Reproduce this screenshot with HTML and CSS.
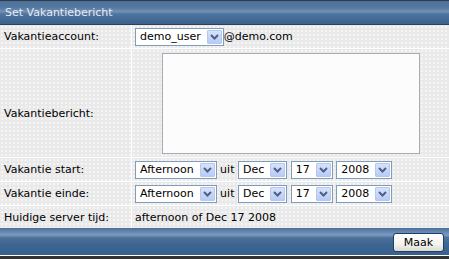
FILE: index.html
```html
<!DOCTYPE html>
<html lang="nl">

<head>
    <meta charset="UTF-8">
    <title>Set Vakantiebericht</title>
    <link rel="stylesheet" href="styles.css">
</head>

<body>
    <div class="panel">
        <div class="titlebar">Set Vakantiebericht</div>

        <div class="row">
            <div class="label">Vakantieaccount:</div>
            <div class="value">
                <span class="line"><span class="select"><span class="sel-text">demo_user</span><span class="sel-btn"><svg width="9" height="6" viewBox="0 0 9 6"><path d="M1 1 L4.5 4.5 L8 1" fill="none" stroke="#4d6185" stroke-width="2"/></svg></span></span>@demo.com</span>
            </div>
        </div>

        <div class="row row-tall">
            <div class="label label-low">Vakantiebericht:</div>
            <div class="value value-center">
                <textarea class="bericht"></textarea>
            </div>
        </div>

        <div class="row">
            <div class="label">Vakantie start:</div>
            <div class="value">
                <span class="line">
                    <span class="select"><span class="sel-text">Afternoon</span><span class="sel-btn"><svg width="9" height="6" viewBox="0 0 9 6"><path d="M1 1 L4.5 4.5 L8 1" fill="none" stroke="#4d6185" stroke-width="2"/></svg></span></span>
                    uit
                    <span class="select"><span class="sel-text">Dec</span><span class="sel-btn"><svg width="9" height="6" viewBox="0 0 9 6"><path d="M1 1 L4.5 4.5 L8 1" fill="none" stroke="#4d6185" stroke-width="2"/></svg></span></span>
                    <span class="select"><span class="sel-text">17</span><span class="sel-btn"><svg width="9" height="6" viewBox="0 0 9 6"><path d="M1 1 L4.5 4.5 L8 1" fill="none" stroke="#4d6185" stroke-width="2"/></svg></span></span>
                    <span class="select"><span class="sel-text">2008</span><span class="sel-btn"><svg width="9" height="6" viewBox="0 0 9 6"><path d="M1 1 L4.5 4.5 L8 1" fill="none" stroke="#4d6185" stroke-width="2"/></svg></span></span>
                </span>
            </div>
        </div>

        <div class="row">
            <div class="label">Vakantie einde:</div>
            <div class="value">
                <span class="line">
                    <span class="select"><span class="sel-text">Afternoon</span><span class="sel-btn"><svg width="9" height="6" viewBox="0 0 9 6"><path d="M1 1 L4.5 4.5 L8 1" fill="none" stroke="#4d6185" stroke-width="2"/></svg></span></span>
                    uit
                    <span class="select"><span class="sel-text">Dec</span><span class="sel-btn"><svg width="9" height="6" viewBox="0 0 9 6"><path d="M1 1 L4.5 4.5 L8 1" fill="none" stroke="#4d6185" stroke-width="2"/></svg></span></span>
                    <span class="select"><span class="sel-text">17</span><span class="sel-btn"><svg width="9" height="6" viewBox="0 0 9 6"><path d="M1 1 L4.5 4.5 L8 1" fill="none" stroke="#4d6185" stroke-width="2"/></svg></span></span>
                    <span class="select"><span class="sel-text">2008</span><span class="sel-btn"><svg width="9" height="6" viewBox="0 0 9 6"><path d="M1 1 L4.5 4.5 L8 1" fill="none" stroke="#4d6185" stroke-width="2"/></svg></span></span>
                </span>
            </div>
        </div>

        <div class="row row-last">
            <div class="label">Huidige server tijd:</div>
            <div class="value"><span class="line">afternoon of Dec 17 2008</span></div>
        </div>

        <div class="footer">
            <button class="maak">Maak</button>
        </div>
    </div>
</body>
</html>
```

FILE: styles.css
```css
body {
    margin: 0;
    font-family: "DejaVu Sans", Verdana, sans-serif;
    font-size: 11px;
    color: #000;
    background-color: #333;
}

.panel {
    width: 449px;
    height: 259px;
    background-color: #fff;
    border-bottom: 3px solid #333;
    box-sizing: border-box;
    overflow: hidden;
}

.titlebar {
    height: 25px;
    box-sizing: border-box;
    border-top: 1px solid #2e3b4a;
    border-bottom: 1px solid #2c3f55;
    background: linear-gradient(#4d719b 0%, #56799f 30%, #7191b8 45%, #4e739d 58%, #3a628f 100%);
    color: #e4ebf3;
    padding: 4px 5px 0;
    line-height: 16px;
}

.row {
    display: grid;
    grid-template-columns: 131px 1fr;
    grid-template-rows: 23px;
    column-gap: 1px;
    margin-bottom: 1px;
    overflow: hidden;
}

.row-tall {
    grid-template-rows: 108px;
}

.row-last {
    grid-template-rows: 22px;
    margin-bottom: 0;
}

.label,
.value {
    background-color: #e9e9e9;
    background-image: radial-gradient(circle, #f9f9f9 0.6px, transparent 1px);
    background-size: 4px 4px;
    display: flex;
    align-items: center;
    overflow: hidden;
}

.label {
    padding-left: 4px;
}

.label-low {
    padding-top: 20px;
}

.value {
    padding-left: 3px;
}

.line {
    white-space: nowrap;
}

.value-center {
    justify-content: center;
    align-items: flex-start;
    padding-left: 0;
}

.select {
    display: inline-flex;
    align-items: center;
    height: 18px;
    box-sizing: border-box;
    border: 1px solid #7f9db9;
    background-color: #fff;
    vertical-align: middle;
}

.sel-text {
    padding: 0 5px 0 4px;
}

.sel-btn {
    width: 15px;
    height: 14px;
    margin: 0 1px;
    box-sizing: border-box;
    border: 1px solid #b7c8ee;
    border-radius: 1px;
    background: linear-gradient(#d6e2fd, #b9cbf5);
    display: flex;
    align-items: center;
    justify-content: center;
}

.bericht {
    width: 258px;
    height: 101px;
    margin-top: 4px;
    box-sizing: border-box;
    border: 1px solid #a5abb4;
    background-color: #fcfcfc;
    resize: none;
}

.footer {
    height: 27px;
    box-sizing: border-box;
    background: linear-gradient(#4a6e98 0%, #6d8db5 18%, #7d9bc0 26%, #4d719b 36%, #3e6692 60%, #38608c 100%);
    display: flex;
    align-items: center;
    justify-content: flex-end;
    padding-right: 5px;
}

.maak {
    width: 51px;
    height: 19px;
    margin-top: 1px;
    font-family: "DejaVu Sans", Verdana, sans-serif;
    font-size: 11px;
    color: #000;
    border: 1px solid #1c3f66;
    border-radius: 3px;
    background: linear-gradient(#ffffff 0%, #f4f3ee 60%, #dcdad0 100%);
    padding: 0;
    cursor: pointer;
}
```
